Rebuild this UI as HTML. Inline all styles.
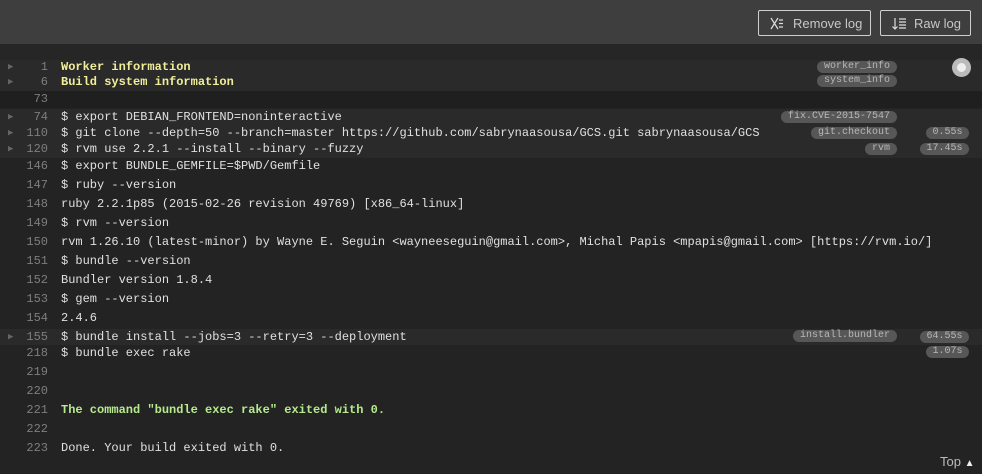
<!DOCTYPE html>
<html><head><style>
body{margin:0;width:982px;height:474px;background:#232323;overflow:hidden;position:relative;font-family:"Liberation Mono",monospace;}
.hdr{position:absolute;left:0;top:0;width:982px;height:44px;background:#3e3e3e;}
.btn{position:absolute;top:10px;height:26px;border:1px solid #cfcfcf;border-radius:2px;color:#c8c8c8;font:13px "Liberation Sans",sans-serif;line-height:25px;box-sizing:border-box;}
.band{position:absolute;left:0;width:982px;background:#2a2a2a;}
.r{position:absolute;left:0;width:982px;font-size:12px;color:#e0e0e0;white-space:pre;}
.n{position:absolute;left:20px;width:28px;text-align:right;color:#7e7e7e;}
.t{position:absolute;left:61px;}
.arr{position:absolute;left:8px;color:#666;font-size:9px;}
.y{color:#f1ee9a;font-weight:bold;}
.g{color:#b6ea8c;font-weight:bold;}
.b{position:absolute;height:12px;line-height:11px;border-radius:6px;background:#575757;color:#b8b8b8;font-size:10px;padding:0 6px;box-sizing:border-box;text-align:center;}
</style></head><body>
<div class="hdr"></div>
<div class="btn" style="left:758px;width:113px;"><svg style="position:absolute;left:11px;top:6px" width="14" height="13" viewBox="0 0 14 13" fill="none" stroke="#ddd" stroke-width="1.2"><path d="M1 1l7 11M8 1L1 12M9 3h4M9 6.5h4M9 10h4"/></svg><span style="position:absolute;left:34px">Remove log</span></div>
<div class="btn" style="left:880px;width:91px;"><svg style="position:absolute;left:11px;top:6px" width="15" height="14" viewBox="0 0 15 14" fill="none" stroke="#ddd" stroke-width="1.2"><path d="M3 1v11M0.5 9.5L3 12l2.5-2.5M7 2h7M7 5h7M7 8h7M7 11h7"/></svg><span style="position:absolute;left:33px">Raw log</span></div>
<div style="position:absolute;left:0;top:44px;width:982px;height:16px;background:#262626"></div>
<div class="band" style="top:60px;height:31px"></div>
<div class="band" style="top:91px;height:17px;background:#1f1f1f"></div>
<div class="band" style="top:109px;height:49px"></div>
<div class="band" style="top:329px;height:16px"></div>
<div style="position:absolute;left:952px;top:58px;width:19px;height:19px;border-radius:50%;background:#bbb"></div>
<div style="position:absolute;left:957px;top:63px;width:9px;height:9px;border-radius:50%;background:#eee"></div>

<div class="r" style="top:59px;line-height:16px"><span class="arr">▶</span><span class="n">1</span><span class="t y">Worker information</span></div>
<div class="r" style="top:74px;line-height:16px"><span class="arr">▶</span><span class="n">6</span><span class="t y">Build system information</span></div>
<div class="r" style="top:91px;line-height:16px"><span class="n">73</span></div>
<div class="r" style="top:109px;line-height:16px"><span class="arr">▶</span><span class="n">74</span><span class="t">$ export DEBIAN_FRONTEND=noninteractive</span></div>
<div class="r" style="top:125px;line-height:16px"><span class="arr">▶</span><span class="n">110</span><span class="t">$ git clone --depth=50 --branch=master https://github.com/sabrynaasousa/GCS.git sabrynaasousa/GCS</span></div>
<div class="r" style="top:141px;line-height:16px"><span class="arr">▶</span><span class="n">120</span><span class="t">$ rvm use 2.2.1 --install --binary --fuzzy</span></div>
<div class="r" style="top:158px;line-height:16px"><span class="n">146</span><span class="t">$ export BUNDLE_GEMFILE=$PWD/Gemfile</span></div>
<div class="r" style="top:177px;line-height:16px"><span class="n">147</span><span class="t">$ ruby --version</span></div>
<div class="r" style="top:196px;line-height:16px"><span class="n">148</span><span class="t">ruby 2.2.1p85 (2015-02-26 revision 49769) [x86_64-linux]</span></div>
<div class="r" style="top:215px;line-height:16px"><span class="n">149</span><span class="t">$ rvm --version</span></div>
<div class="r" style="top:234px;line-height:16px"><span class="n">150</span><span class="t">rvm 1.26.10 (latest-minor) by Wayne E. Seguin &lt;wayneeseguin@gmail.com&gt;, Michal Papis &lt;mpapis@gmail.com&gt; [https://rvm.io/]</span></div>
<div class="r" style="top:253px;line-height:16px"><span class="n">151</span><span class="t">$ bundle --version</span></div>
<div class="r" style="top:272px;line-height:16px"><span class="n">152</span><span class="t">Bundler version 1.8.4</span></div>
<div class="r" style="top:291px;line-height:16px"><span class="n">153</span><span class="t">$ gem --version</span></div>
<div class="r" style="top:310px;line-height:16px"><span class="n">154</span><span class="t">2.4.6</span></div>
<div class="r" style="top:329px;line-height:16px"><span class="arr">▶</span><span class="n">155</span><span class="t">$ bundle install --jobs=3 --retry=3 --deployment</span></div>
<div class="r" style="top:345px;line-height:16px"><span class="n">218</span><span class="t">$ bundle exec rake</span></div>
<div class="r" style="top:364px;line-height:16px"><span class="n">219</span></div>
<div class="r" style="top:383px;line-height:16px"><span class="n">220</span></div>
<div class="r" style="top:402px;line-height:16px"><span class="n">221</span><span class="t g">The command "bundle exec rake" exited with 0.</span></div>
<div class="r" style="top:421px;line-height:16px"><span class="n">222</span></div>
<div class="r" style="top:440px;line-height:16px"><span class="n">223</span><span class="t">Done. Your build exited with 0.</span></div>

<div class="b" style="left:817px;width:80px;top:61px">worker_info</div>
<div class="b" style="left:817px;width:80px;top:75px">system_info</div>
<div class="b" style="left:781px;width:116px;top:111px">fix.CVE-2015-7547</div>
<div class="b" style="left:811px;width:86px;top:127px">git.checkout</div>
<div class="b" style="left:865px;width:32px;top:143px">rvm</div>
<div class="b" style="left:926px;width:43px;top:127px">0.55s</div>
<div class="b" style="left:920px;width:49px;top:143px">17.45s</div>
<div class="b" style="left:793px;width:104px;top:330px">install.bundler</div>
<div class="b" style="left:920px;width:49px;top:331px">64.55s</div>
<div class="b" style="left:926px;width:43px;top:346px">1.07s</div>
<div style="position:absolute;left:940px;top:454px;font:13px 'Liberation Sans',sans-serif;color:#bbb">Top <span style="font-size:10px;color:#eee">▲</span></div>
</body></html>
